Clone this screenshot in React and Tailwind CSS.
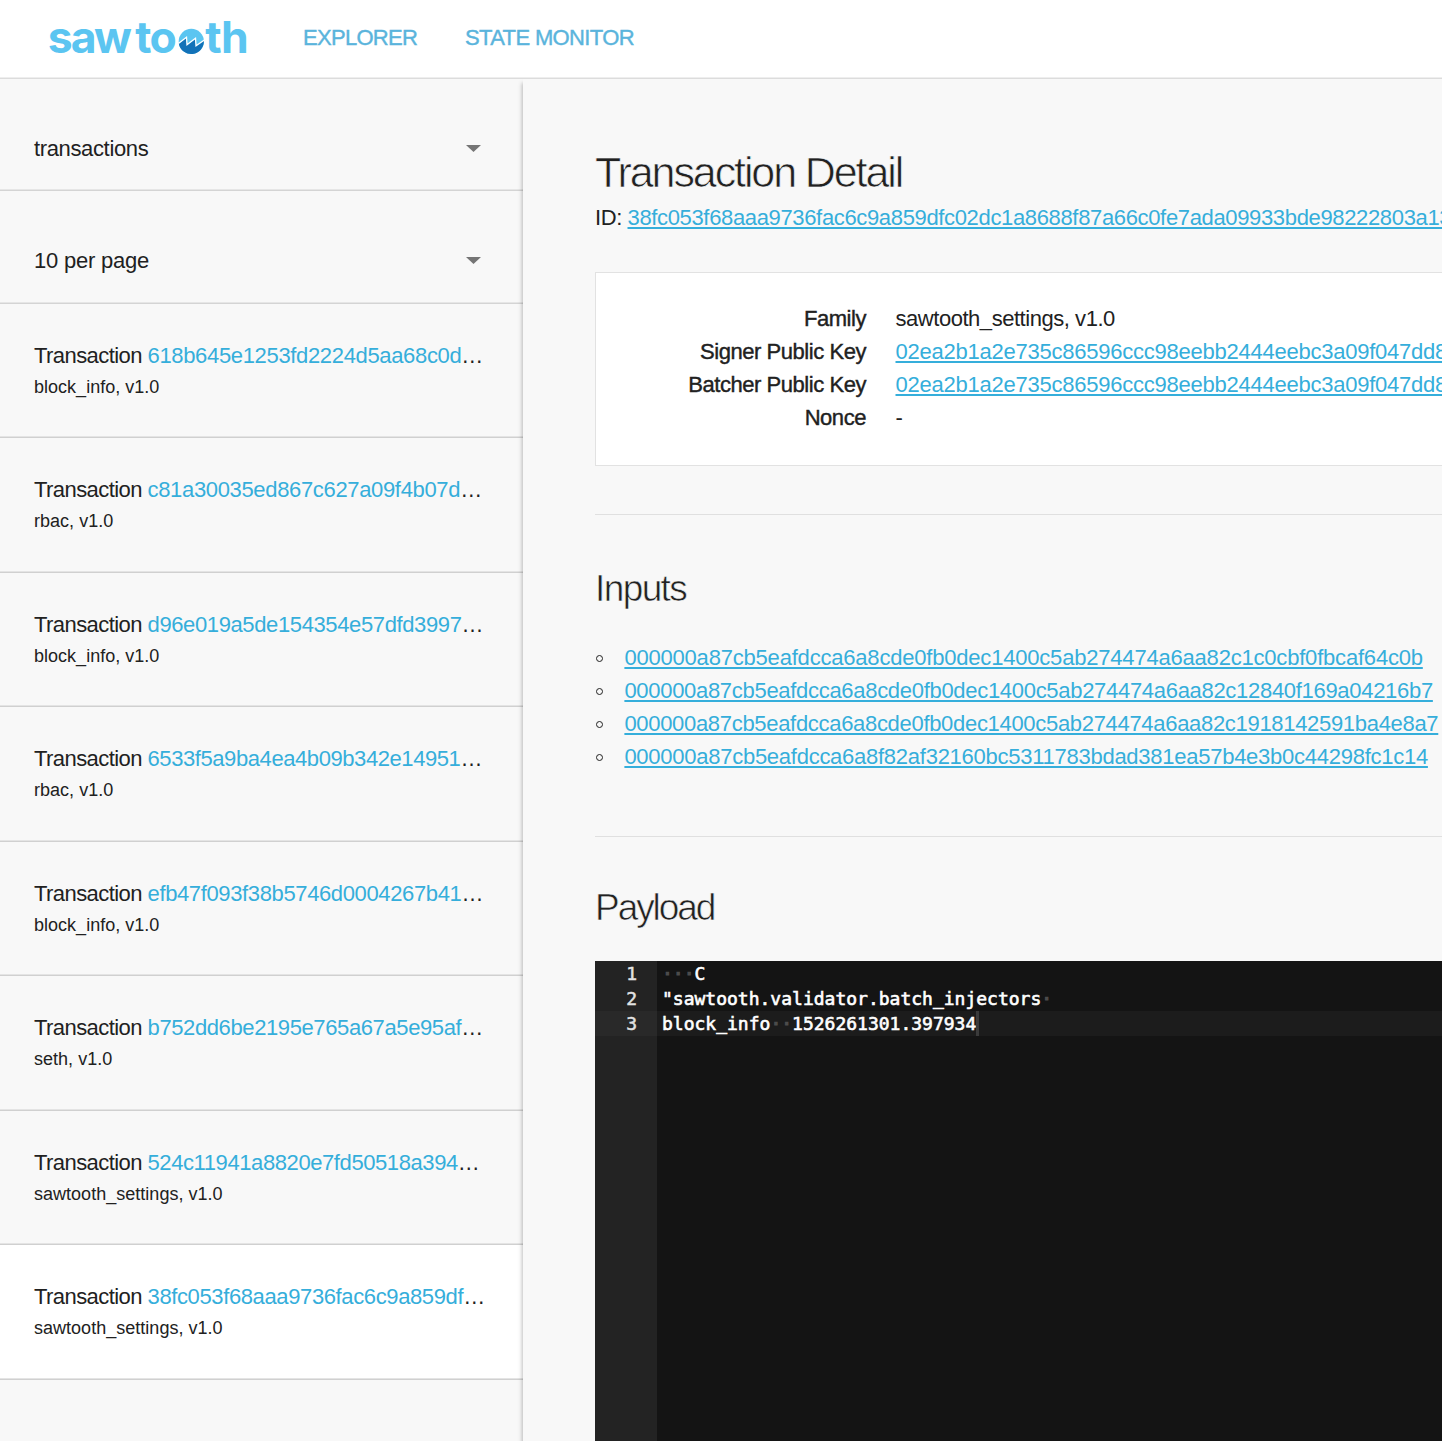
const transactions = [
  { id: "618b645e1253fd2224d5aa68c0d", family: "block_info, v1.0", tracking: "tracking-[-0.34px]" },
  { id: "c81a30035ed867c627a09f4b07d", family: "rbac, v1.0", tracking: "tracking-[-0.34px]" },
  { id: "d96e019a5de154354e57dfd3997", family: "block_info, v1.0", tracking: "tracking-[-0.38px]" },
  { id: "6533f5a9ba4ea4b09b342e14951", family: "rbac, v1.0", tracking: "tracking-[-0.42px]" },
  { id: "efb47f093f38b5746d0004267b41", family: "block_info, v1.0", tracking: "tracking-[-0.37px]" },
  { id: "b752dd6be2195e765a67a5e95af", family: "seth, v1.0", tracking: "tracking-[-0.39px]" },
  { id: "524c11941a8820e7fd50518a394", family: "sawtooth_settings, v1.0", tracking: "tracking-[-0.41px]" },
  { id: "38fc053f68aaa9736fac6c9a859df", family: "sawtooth_settings, v1.0", tracking: "tracking-[-0.38px]", active: true },
];

const inputs = [
  { id: "000000a87cb5eafdcca6a8cde0fb0dec1400c5ab274474a6aa82c1c0cbf0fbcaf64c0b", tracking: "tracking-[-0.198px]" },
  { id: "000000a87cb5eafdcca6a8cde0fb0dec1400c5ab274474a6aa82c12840f169a04216b7", tracking: "tracking-[-0.3px]" },
  { id: "000000a87cb5eafdcca6a8cde0fb0dec1400c5ab274474a6aa82c1918142591ba4e8a7", tracking: "tracking-[-0.31px]" },
  { id: "000000a87cb5eafdcca6a8f82af32160bc5311783bdad381ea57b4e3b0c44298fc1c14", tracking: "tracking-[-0.26px]" },
];

const publicKey = "02ea2b1a2e735c86596ccc98eebb2444eebc3a09f047dd8";

function Logo() {
  return (
    <svg width="204" height="60" viewBox="46 6 204 60" className="shrink-0 overflow-visible">
      <text x="47.8 70.8 93.9 135.2 149.4" y="53.4" fill="#5bc5f1" className="font-['Inter',sans-serif] text-[44.5px] font-bold">
        sawto
      </text>
      <text x="205.3 221" y="53.4" fill="#5bc5f1" className="font-['Inter',sans-serif] text-[44.5px] font-bold">
        th
      </text>
      <circle cx="191.3" cy="41.4" r="12.6" fill="#5bc5f1" />
      <path
        d="M178.8 43.4 L186.5 37.4 L187 45 L195.5 38.5 L196 46 L203.8 40.4 A12.6 12.6 0 0 1 178.8 43.4 Z"
        fill="#1372b8"
      />
      <path
        d="M178.4 43.4 L186.5 37.2 L187 44.8 L195.5 38.3 L196 45.8 L204.4 40"
        fill="none"
        stroke="#fff"
        strokeWidth="1.3"
      />
    </svg>
  );
}

function Select({ label, className }) {
  return (
    <div
      className={`flex items-start justify-between border-b border-[#d4d4d4] pl-[34px] pr-[42px] pt-[53px] leading-[33px] shadow-[inset_0_-1px_0_#e6e6e6] ${className}`}
    >
      <span>{label}</span>
      <svg width="15" height="7" viewBox="0 0 15 7" className="mt-[13px]">
        <path d="M0 0H15L7.5 7Z" fill="#757575" />
      </svg>
    </div>
  );
}

function Transaction({ id, family, tracking, active }) {
  return (
    <li
      className={`h-[134.5px] border-b border-[#d0d0d0] pl-[34px] pt-[35px] shadow-[inset_0_-1px_0_#e4e4e4] ${
        active ? "bg-white" : ""
      }`}
    >
      <div className="whitespace-pre leading-[33px]">
        <span className="tracking-[-0.56px]">Transaction </span>
        <span className={`text-[#35aedb] ${tracking}`}>{id}</span>
        <span>…</span>
      </div>
      <div className="mt-[2px] text-[18px] leading-[27px] tracking-[0.02px]">{family}</div>
    </li>
  );
}

function Link({ children, className = "" }) {
  return (
    <a
      href="#"
      className={`text-[#35aedb] underline decoration-2 underline-offset-[2px] [text-decoration-skip-ink:none] ${className}`}
    >
      {children}
    </a>
  );
}

function Row({ label, children }) {
  return (
    <div className="flex h-[33px] gap-[29.5px] whitespace-nowrap leading-[33px]">
      <div className="w-[270px] shrink-0 text-right tracking-[-0.45px] [-webkit-text-stroke:0.4px_#212121]">{label}</div>
      <div>{children}</div>
    </div>
  );
}

function Dots({ count }) {
  return <span className="text-[#4c4c4c] [-webkit-text-stroke:1.2px_#4c4c4c]">{"·".repeat(count)}</span>;
}

function CodeLine({ number, active, children }) {
  return (
    <div className="flex h-[25px] leading-[25px]">
      <div
        className={`w-[62px] shrink-0 pr-[20px] text-right text-[#e2e2e2] [-webkit-text-stroke:0.5px_#e2e2e2] ${
          active ? "bg-[#292929]" : ""
        }`}
      >
        {number}
      </div>
      <div className={`flex grow whitespace-pre pl-[5px] ${active ? "bg-[#1c1c1c]" : ""}`}>{children}</div>
    </div>
  );
}

function Code({ children }) {
  return <span className="[-webkit-text-stroke:0.6px_#fff]">{children}</span>;
}

export default function App() {
  return (
    <div className="flex h-[1441px] w-[1442px] flex-col overflow-hidden bg-[#f8f8f8] font-['Liberation_Sans',Arial,sans-serif] text-[22px] text-[#212121]">
      <header className="flex h-[79px] shrink-0 items-start border-b border-[#dcdcdc] bg-white pl-[46px] shadow-[inset_0_-1px_0_#eeeeee]">
        <div className="pt-[6px]">
          <Logo />
        </div>
        <nav className="flex pt-[21px] leading-[33px] text-[#5ab4dc] [-webkit-text-stroke:0.4px_#5ab4dc]">
          <a href="#" className="ml-[53px] w-[162px] tracking-[-0.71px]">EXPLORER</a>
          <a href="#" className="tracking-[-0.64px]">STATE MONITOR</a>
        </nav>
      </header>

      <div className="flex min-h-0 grow overflow-hidden">
        <aside className="w-[523px] shrink-0">
          <Select label={<span className="tracking-[-0.36px]">transactions</span>} className="h-[112px]" />
          <Select label={<span className="tracking-[-0.22px]">10 per page</span>} className="h-[112.9px]" />
          <ul>
            {transactions.map((t) => (
              <Transaction key={t.id} {...t} />
            ))}
          </ul>
        </aside>

        <main className="relative min-w-0 grow bg-[#f8f8f8] pl-[72px] shadow-[-1px_4px_4px_rgba(0,0,0,0.26)]">
          <div className="w-[1000px]">
            <h1 className="pt-[63px] text-[43px] leading-[60px] tracking-[-2.1px] [-webkit-text-stroke:0.7px_#f8f8f8]">
              Transaction Detail
            </h1>
            <div className="-mt-px flex whitespace-nowrap leading-[33px]">
              <span className="w-[32.5px] shrink-0 tracking-[-0.4px]">ID:</span>
              <Link className="tracking-[-0.347px]">
                38fc053f68aaa9736fac6c9a859dfc02dc1a8688f87a66c0fe7ada09933bde98222803a13
              </Link>
            </div>

            <section className="mt-[38px] h-[194px] border border-[#e2e2e2] bg-white pt-[29px]">
              <Row label="Family">
                <span className="tracking-[-0.46px]">sawtooth_settings, v1.0</span>
              </Row>
              <Row label="Signer Public Key">
                <Link className="tracking-[-0.24px]">{publicKey}</Link>
              </Row>
              <Row label="Batcher Public Key">
                <Link className="tracking-[-0.24px]">{publicKey}</Link>
              </Row>
              <Row label="Nonce">-</Row>
            </section>

            <hr className="mt-[48px] border-[#e0e0e0]" />
            <h2 className="mt-[49px] text-[37px] leading-[50px] tracking-[-1.6px] [-webkit-text-stroke:0.6px_#f8f8f8]">
              Inputs
            </h2>
            <ul className="mt-[27px]">
              {inputs.map((input) => (
                <li key={input.id} className="flex h-[33px] items-start whitespace-nowrap leading-[33px]">
                  <span className="ml-px mr-[21.4px] mt-[14px] size-[7px] shrink-0 rounded-full border border-[#212121]" />
                  <Link className={input.tracking}>{input.id}</Link>
                </li>
              ))}
            </ul>

            <hr className="mt-[63px] border-[#e0e0e0]" />
            <h2 className="mt-[46px] text-[37px] leading-[50px] tracking-[-2.05px] [-webkit-text-stroke:0.6px_#f8f8f8]">
              Payload
            </h2>
            <div className="mt-[28px] h-[480px] bg-[linear-gradient(to_right,#232323_62px,#141414_62px)] font-['DejaVu_Sans_Mono',monospace] text-[18px] text-white">
              <CodeLine number={1}>
                <Dots count={3} />
                <Code>C</Code>
              </CodeLine>
              <CodeLine number={2}>
                <Code>"sawtooth.validator.batch_injectors</Code>
                <Dots count={1} />
              </CodeLine>
              <CodeLine number={3} active>
                <Code>block_info</Code>
                <Dots count={2} />
                <Code>1526261301.397934</Code>
                <span className="h-[25px] w-[3px] bg-[#3b3b3b]" />
              </CodeLine>
            </div>
          </div>
        </main>
      </div>
    </div>
  );
}
